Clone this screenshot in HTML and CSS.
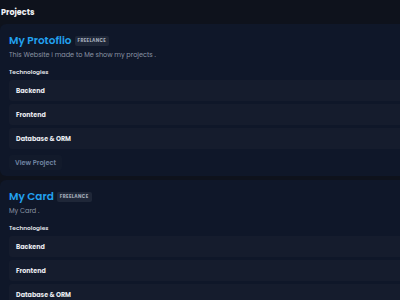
FILE: index.html
```html
<!DOCTYPE html>
<html lang="en">

<head>
    <meta charset="UTF-8">
    <meta name="viewport" content="width=device-width, initial-scale=1.0">
    <title>Projects</title>
    <link rel="stylesheet" href="styles.css">
</head>

<body>
    <h2 class="page-title">Projects</h2>

    <div class="projects">
        <div class="card">
            <div class="card-head">
                <h3 class="card-title">My Protoflio</h3>
                <span class="badge">FREELANCE</span>
            </div>
            <p class="desc">This Website i made to Me show my projects .</p>
            <p class="tech-label">Technologies</p>
            <div class="tech-list">
                <div class="tech">Backend</div>
                <div class="tech">Frontend</div>
                <div class="tech">Database &amp; ORM</div>
            </div>
            <a class="view-btn" href="#">View Project</a>
        </div>

        <div class="card">
            <div class="card-head">
                <h3 class="card-title">My Card</h3>
                <span class="badge">FREELANCE</span>
            </div>
            <p class="desc">My Card .</p>
            <p class="tech-label">Technologies</p>
            <div class="tech-list">
                <div class="tech">Backend</div>
                <div class="tech">Frontend</div>
                <div class="tech">Database &amp; ORM</div>
            </div>
            <a class="view-btn" href="#">View Project</a>
        </div>
    </div>
</body>

</html>
```

FILE: styles.css
```css
body {
    font-family: 'Poppins', 'Open Sans', 'DejaVu Sans', sans-serif;
    background-color: #0e121c;
    color: #e8eaf0;
    margin: 0;
    overflow: hidden;
}

.page-title {
    margin: 0;
    height: 24px;
    padding: 7px 0 0 1px;
    box-sizing: border-box;
    font-size: 8px;
    font-weight: 700;
    line-height: 11px;
    color: #f2f4f7;
}

.projects {
    display: flex;
    flex-direction: column;
    gap: 4px;
}

.card {
    background-color: #0f1729;
    border-radius: 6px 0 0 6px;
    padding: 10px 0 6px 9px;
    margin-right: -10px;
}

.card-head {
    display: flex;
    align-items: center;
    gap: 3px;
}

.card-title {
    margin: 0;
    font-size: 10.5px;
    font-weight: 600;
    line-height: 14px;
    color: #22a2f0;
}

.badge {
    font-size: 4.6px;
    font-weight: 700;
    letter-spacing: 0.35px;
    line-height: 6px;
    padding: 2px 3px;
    border-radius: 2px;
    background-color: #1f2738;
    color: #a3abba;
}

.desc {
    margin: 2px 0 0;
    font-size: 6.5px;
    line-height: 9px;
    color: #8a93a3;
}

.tech-label {
    margin: 9px 0 0;
    font-size: 5.8px;
    font-weight: 600;
    line-height: 8px;
    color: #e2e5ea;
}

.tech-list {
    display: flex;
    flex-direction: column;
    gap: 3px;
    margin-top: 4px;
}

.tech {
    height: 21px;
    display: flex;
    align-items: center;
    padding-left: 7px;
    border-radius: 3px 0 0 3px;
    background-color: #151c2d;
    font-size: 6.4px;
    font-weight: 700;
    color: #e8eaf0;
}

.view-btn {
    display: block;
    width: fit-content;
    margin-top: 6px;
    padding: 4px 6px;
    border-radius: 3px;
    background-color: #121a2b;
    font-size: 6.6px;
    font-weight: 600;
    line-height: 7px;
    color: #6f83a0;
    text-decoration: none;
}
```
